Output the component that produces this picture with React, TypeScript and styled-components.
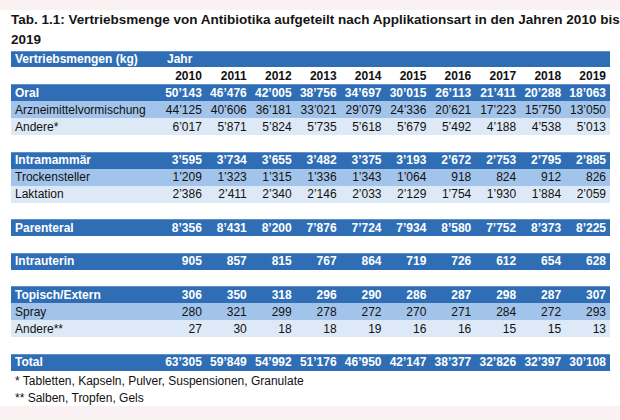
import React from "react";
import styled, { createGlobalStyle } from "styled-components";

const Global = createGlobalStyle`
  html, body { margin: 0; padding: 0; }
  body {
    background: #faf2f2;
    font-family: "Liberation Sans", Arial, sans-serif;
    width: 620px;
    height: 420px;
    overflow: hidden;
  }
`;

const Page = styled.div`
  margin-top: 12px;
  height: 396px;
  background: #ffffff;
  padding: 0 11px 0 11px;
  box-sizing: border-box;
`;

const Title = styled.h1`
  margin: -2px 0 0 0;
  font-size: 13.5px;
  line-height: 20px;
  font-weight: bold;
  color: #151515;
  white-space: nowrap;
`;

const Table = styled.div`
  margin-top: 1px;
  width: 599px;
  display: flex;
  flex-direction: column;
`;

const GRID = "150px repeat(10, 1fr)";

type Variant = "main" | "sub" | "alt";

const bg: Record<Variant, string> = {
  main: "#2f6eb5",
  sub: "#a3c4ea",
  alt: "#dde9f6",
};

const HeaderBar = styled.div`
  display: grid;
  grid-template-columns: 150px 1fr;
  height: 16px;
  align-items: center;
  background: #2f6eb5;
  box-shadow: inset 0 1px 0 #5d90cd;
  color: #ffffff;
  font-size: 12px;
  font-weight: bold;
`;

const HeaderLabel = styled.span<{ $indent: number }>`
  padding-left: ${(p) => p.$indent}px;
  line-height: 16px;
`;

const YearRow = styled.div`
  display: grid;
  grid-template-columns: ${GRID};
  height: 17px;
  align-items: end;
  line-height: 15px;
  font-size: 12px;
  font-weight: bold;
  color: #111;
`;

const Row = styled.div<{ $variant: Variant }>`
  display: grid;
  grid-template-columns: ${GRID};
  height: 17px;
  align-items: center;
  background: ${(p) => bg[p.$variant]};
  box-shadow: ${(p) => (p.$variant === "main" ? "inset 0 1px 0 #5d90cd" : "none")};
  color: ${(p) => (p.$variant === "main" ? "#ffffff" : "#111111")};
  font-size: 12px;
  font-weight: ${(p) => (p.$variant === "main" ? "bold" : "normal")};
`;

const Label = styled.span`
  padding-left: 4px;
  white-space: nowrap;
`;

const Num = styled.span`
  text-align: right;
  padding-right: 4px;
  white-space: nowrap;
`;

const Spacer = styled.div`
  height: 16.6px;
`;

const Notes = styled.div`
  margin-top: 2px;
  padding-left: 4px;
  font-size: 12px;
  line-height: 17px;
  color: #111;
`;

const years = [2010, 2011, 2012, 2013, 2014, 2015, 2016, 2017, 2018, 2019];

type R = { label: string; v: Variant; nums: string[] };
const groups: R[][] = [
  [
    { label: "Oral", v: "main", nums: ["50’143", "46’476", "42’005", "38’756", "34’697", "30’015", "26’113", "21’411", "20’288", "18’063"] },
    { label: "Arzneimittelvormischung", v: "sub", nums: ["44’125", "40’606", "36’181", "33’021", "29’079", "24’336", "20’621", "17’223", "15’750", "13’050"] },
    { label: "Andere*", v: "alt", nums: ["6’017", "5’871", "5’824", "5’735", "5’618", "5’679", "5’492", "4’188", "4’538", "5’013"] },
  ],
  [
    { label: "Intramammär", v: "main", nums: ["3’595", "3’734", "3’655", "3’482", "3’375", "3’193", "2’672", "2’753", "2’795", "2’885"] },
    { label: "Trockensteller", v: "sub", nums: ["1’209", "1’323", "1’315", "1’336", "1’343", "1’064", "918", "824", "912", "826"] },
    { label: "Laktation", v: "alt", nums: ["2’386", "2’411", "2’340", "2’146", "2’033", "2’129", "1’754", "1’930", "1’884", "2’059"] },
  ],
  [
    { label: "Parenteral", v: "main", nums: ["8’356", "8’431", "8’200", "7’876", "7’724", "7’934", "8’580", "7’752", "8’373", "8’225"] },
  ],
  [
    { label: "Intrauterin", v: "main", nums: ["905", "857", "815", "767", "864", "719", "726", "612", "654", "628"] },
  ],
  [
    { label: "Topisch/Extern", v: "main", nums: ["306", "350", "318", "296", "290", "286", "287", "298", "287", "307"] },
    { label: "Spray", v: "sub", nums: ["280", "321", "299", "278", "272", "270", "271", "284", "272", "293"] },
    { label: "Andere**", v: "alt", nums: ["27", "30", "18", "18", "19", "16", "16", "15", "15", "13"] },
  ],
  [
    { label: "Total", v: "main", nums: ["63’305", "59’849", "54’992", "51’176", "46’950", "42’147", "38’377", "32’826", "32’397", "30’108"] },
  ],
];

export default function App() {
  return (
    <>
      <Global />
      <Page>
        <Title>
          Tab. 1.1: Vertriebsmenge von Antibiotika aufgeteilt nach Applikationsart in den Jahren 2010 bis
          <br />
          2019
        </Title>
        <Table>
          <HeaderBar>
            <HeaderLabel $indent={4}>Vertriebsmengen (kg)</HeaderLabel>
            <HeaderLabel $indent={6}>Jahr</HeaderLabel>
          </HeaderBar>
          <YearRow>
            <Label />
            {years.map((y) => (
              <Num key={y}>{y}</Num>
            ))}
          </YearRow>
          {groups.map((g, gi) => (
            <React.Fragment key={gi}>
              {gi > 0 && <Spacer />}
              {g.map((r) => (
                <Row key={r.label} $variant={r.v}>
                  <Label>{r.label}</Label>
                  {r.nums.map((n, i) => (
                    <Num key={i}>{n}</Num>
                  ))}
                </Row>
              ))}
            </React.Fragment>
          ))}
        </Table>
        <Notes>
          <div>* Tabletten, Kapseln, Pulver, Suspensionen, Granulate</div>
          <div>** Salben, Tropfen, Gels</div>
        </Notes>
      </Page>
    </>
  );
}
